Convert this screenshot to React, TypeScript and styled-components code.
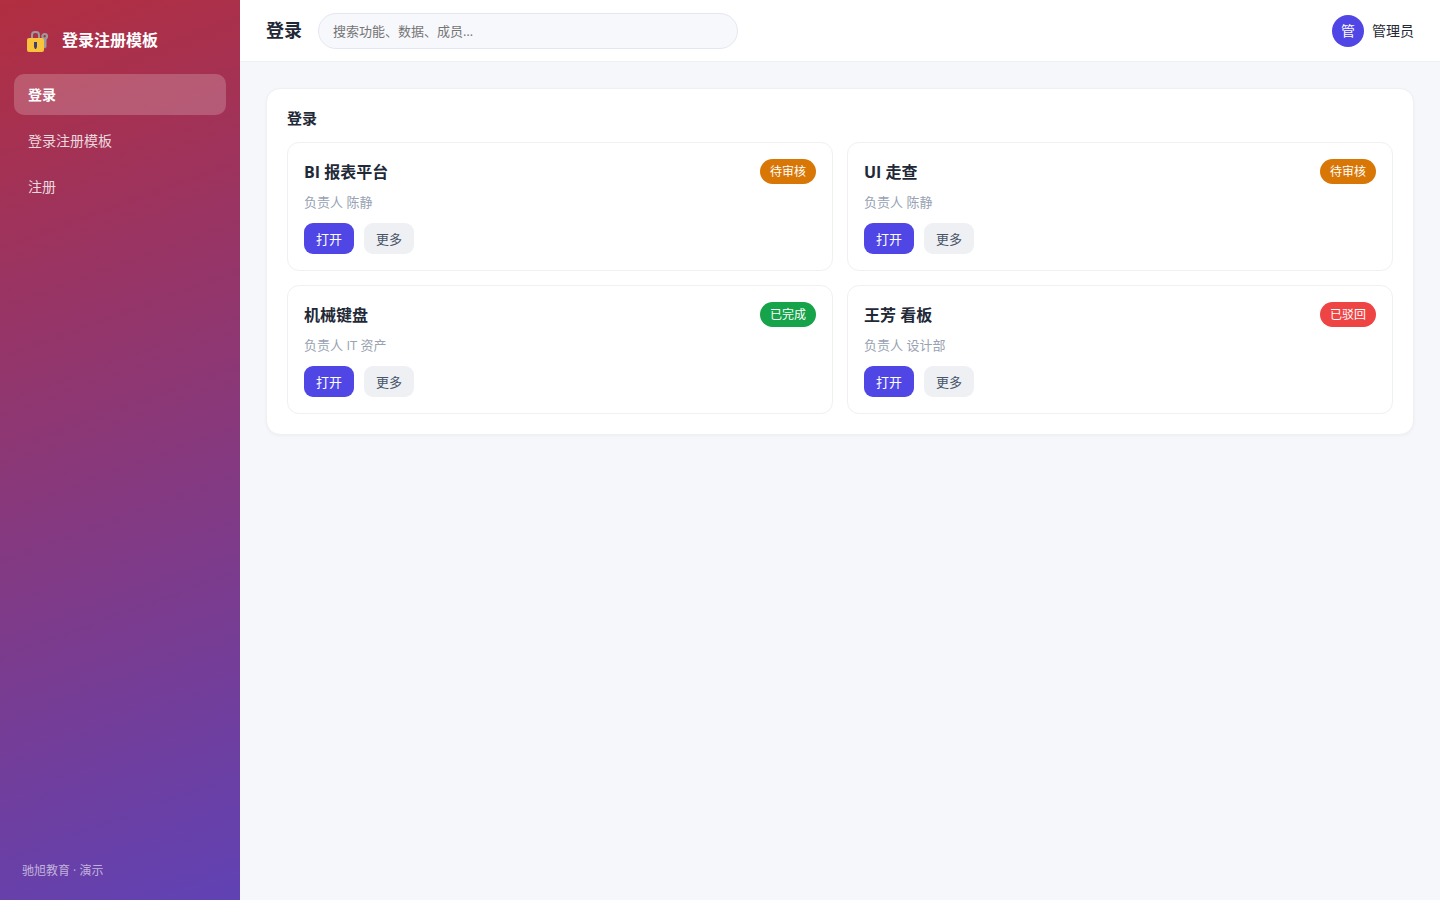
import React from "react";
import styled, { createGlobalStyle } from "styled-components";

const GlobalStyle = createGlobalStyle`
  * { box-sizing: border-box; }
  body {
    margin: 0;
    background: #f5f7fb;
    color: #1f2937;
    font-family: "Open Sans", "Noto Sans CJK SC", sans-serif;
    font-size: 14px;
    line-height: 21px;
  }
  button, input { font-family: inherit; }
  h1, h2, h3, p { margin: 0; padding: 0; }
`;

const Shell = styled.div`
  display: flex;
  min-height: 100vh;
`;

const Sidebar = styled.aside`
  display: flex;
  flex-direction: column;
  flex: 0 0 240px;
  padding: 20px 14px;
  color: #fff;
  background: linear-gradient(160deg, #b22e40, #6042b4);
`;

const Brand = styled.div`
  display: flex;
  align-items: center;
  gap: 12px;
  height: 40px;
  margin-bottom: 14px;
  padding: 0 12px;
  font-size: 16px;
  font-weight: 700;
`;

const Nav = styled.nav`
  display: flex;
  flex-direction: column;
  gap: 5px;
`;

const NavLink = styled.a<{ $active?: boolean }>`
  padding: 10px 14px;
  border-radius: 10px;
  color: ${(p) => (p.$active ? "#fff" : "rgba(255, 255, 255, 0.82)")};
  background: ${(p) => (p.$active ? "rgba(255, 255, 255, 0.2)" : "transparent")};
  font-weight: ${(p) => (p.$active ? 700 : 400)};
  text-decoration: none;
`;

const SidebarFooter = styled.footer`
  margin-top: auto;
  padding: 0 8px;
  color: rgba(255, 255, 255, 0.6);
  font-size: 12px;
  line-height: 18px;
`;

const Main = styled.div`
  flex: 1;
  min-width: 0;
`;

const Topbar = styled.header`
  display: flex;
  align-items: center;
  gap: 16px;
  height: 62px;
  padding: 0 26px;
  background: #fff;
  border-bottom: 1px solid #eef0f4;
`;

const PageTitle = styled.h1`
  font-size: 18px;
  line-height: 27px;
  white-space: nowrap;
`;

const Search = styled.input`
  flex: 0 1 420px;
  min-width: 0;
  height: 36px;
  padding: 0 14px;
  border: 1px solid #e5e7f0;
  border-radius: 18px;
  background: #f7f8fc;
  color: #1f2937;
  font-size: 13px;
  &::placeholder { color: #757575; }
`;

const User = styled.div`
  display: flex;
  align-items: center;
  gap: 8px;
  margin-left: auto;
  white-space: nowrap;
`;

const Avatar = styled.span`
  display: grid;
  place-items: center;
  width: 32px;
  height: 32px;
  border-radius: 50%;
  color: #fff;
  background: #4f46e5;
`;

const Content = styled.main`
  padding: 26px;
`;

const Panel = styled.section`
  padding: 20px;
  border: 1px solid #eef0f4;
  border-radius: 14px;
  background: #fff;
  box-shadow: 0 1px 3px rgba(16, 24, 40, 0.04);
`;

const PanelTitle = styled.h2`
  margin-bottom: 14px;
  font-size: 15px;
  line-height: 19px;
`;

const CardGrid = styled.div`
  display: grid;
  grid-template-columns: repeat(2, minmax(0, 1fr));
  gap: 14px;
`;

const Card = styled.article`
  padding: 16px;
  border: 1px solid #eef0f2;
  border-radius: 12px;
`;

const CardHead = styled.div`
  display: flex;
  align-items: center;
  justify-content: space-between;
`;

const CardTitle = styled.h3`
  font-size: 16px;
  line-height: 24px;
`;

const Badge = styled.span<{ $color: string }>`
  padding: 3px 10px;
  border-radius: 13px;
  color: #fff;
  background: ${(p) => p.$color};
  font-size: 12px;
  line-height: 19px;
`;

const Owner = styled.p`
  margin: 8px 0 11px;
  color: #98a2b3;
  font-size: 13px;
  line-height: 20px;
`;

const Actions = styled.div`
  display: flex;
  gap: 10px;
`;

const Button = styled.button<{ $primary?: boolean }>`
  height: 31px;
  padding: 0 12px;
  border: 0;
  border-radius: 9px;
  color: ${(p) => (p.$primary ? "#fff" : "#475569")};
  background: ${(p) => (p.$primary ? "#4f46e5" : "#eef0f4")};
  font-size: 13px;
  cursor: pointer;
`;

const LockIcon = () => (
  <svg width="24" height="24" viewBox="0 0 24 24" aria-hidden="true">
    <circle cx="18.7" cy="8.3" r="2.3" fill="none" stroke="#9b9b9b" strokeWidth="2.2" />
    <path d="M17.500 10h3v9l-1.500 1.500-1.500-1z" fill="#9b9b9b" />
    <path d="M6 11V7a3 3 0 0 1 3-3h1a3 3 0 0 1 3 3v4" fill="none" stroke="#9b9b9b" strokeWidth="2" />
    <rect x="1" y="10" width="17" height="14" rx="2" fill="#fbc23c" />
    <path d="M8 14h3v5l-1 2h-1l-1-2z" fill="#41406e" />
  </svg>
);

const navItems = ["登录", "登录注册模板", "注册"];

const cards = [
  { title: "BI 报表平台", owner: "陈静", status: "待审核", color: "#d97706" },
  { title: "UI 走查", owner: "陈静", status: "待审核", color: "#d97706" },
  { title: "机械键盘", owner: "IT 资产", status: "已完成", color: "#16a34a" },
  { title: "王芳 看板", owner: "设计部", status: "已驳回", color: "#ef4444" },
];

export default function App() {
  return (
    <>
      <GlobalStyle />
      <Shell>
        <Sidebar>
          <Brand>
            <LockIcon />
            <span>登录注册模板</span>
          </Brand>
          <Nav>
            {navItems.map((label, i) => (
              <NavLink key={label} href="#" $active={i === 0}>{label}</NavLink>
            ))}
          </Nav>
          <SidebarFooter>驰旭教育 · 演示</SidebarFooter>
        </Sidebar>
        <Main>
          <Topbar>
            <PageTitle>登录</PageTitle>
            <Search type="search" aria-label="搜索" placeholder="搜索功能、数据、成员…" />
            <User>
              <Avatar>管</Avatar>
              <span>管理员</span>
            </User>
          </Topbar>
          <Content>
            <Panel>
              <PanelTitle>登录</PanelTitle>
              <CardGrid>
                {cards.map((c) => (
                  <Card key={c.title}>
                    <CardHead>
                      <CardTitle>{c.title}</CardTitle>
                      <Badge $color={c.color}>{c.status}</Badge>
                    </CardHead>
                    <Owner>负责人 {c.owner}</Owner>
                    <Actions>
                      <Button type="button" $primary>打开</Button>
                      <Button type="button">更多</Button>
                    </Actions>
                  </Card>
                ))}
              </CardGrid>
            </Panel>
          </Content>
        </Main>
      </Shell>
    </>
  );
}
